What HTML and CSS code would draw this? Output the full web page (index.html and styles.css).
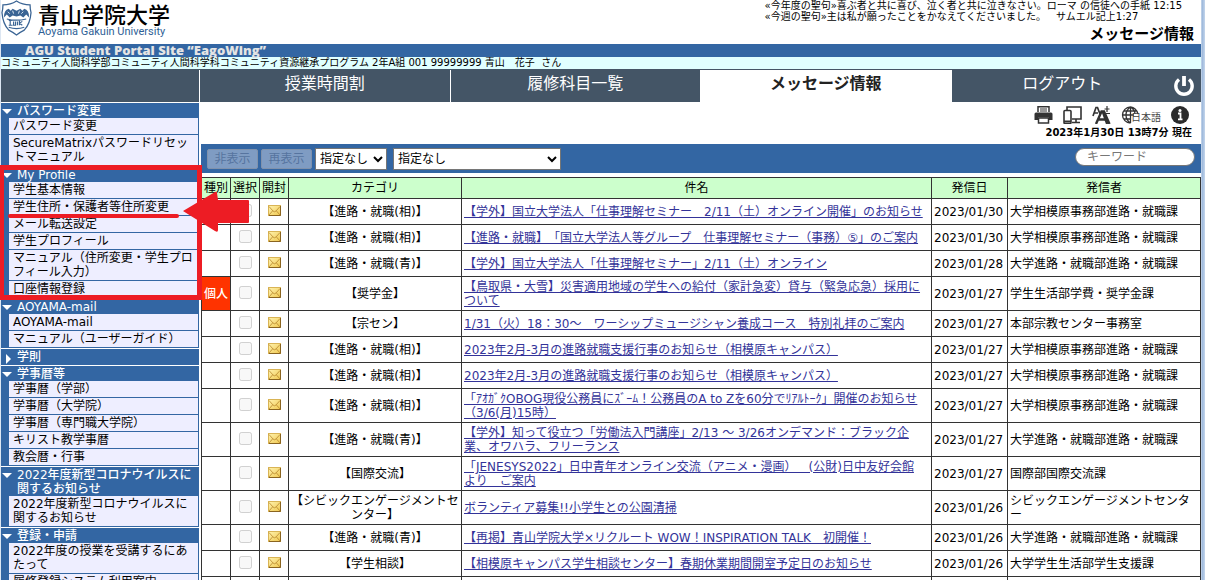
FILE: index.html
```html
<!DOCTYPE html>
<html lang="ja">
<head>
<meta charset="utf-8">
<title>メッセージ情報</title>
<link rel="stylesheet" href="styles.css">
</head>
<body>
<svg class="defs" width="0" height="0" aria-hidden="true">
  <defs>
    <linearGradient id="gold" x1="0" y1="0" x2="1" y2="1">
      <stop offset="0" stop-color="#fff3b0"/><stop offset="1" stop-color="#f0c850"/>
    </linearGradient>
    <symbol id="mail" viewBox="0 0 13 11">
      <rect x=".5" y=".5" width="12" height="10" fill="url(#gold)" stroke="#d9b455"/>
      <path d="M1 1.500 5 6Q6.500 7.500 8 6L12 1.500M1 10 4.500 6M12 10 8.500 6" fill="none" stroke="#b8862c" stroke-width=".8"/>
      <path d="M1 10.500H12.500V1" fill="none" stroke="#8a6420"/>
    </symbol>
  </defs>
</svg>
<div class="page">
  <header class="top">
    <div class="brand">
      <svg class="crest" viewBox="0 0 32 37" aria-hidden="true">
        <path d="M16 1Q22 5 30 5Q30 9 31 13Q30 25 24 31Q20 33 16 36Q12 33 8 31Q2 25 1 13Q2 9 2 5Q10 5 16 1Z" fill="#fff" stroke="#3a6494" stroke-width="1.300"/>
        <path d="M3 18Q3 10 8 9L10 11L12 9L16 11L20 9L22 11L24 9Q29 10 29 18L26 15L23 18L20 16L16 17L12 16L9 18L6 15Z" fill="#3a6494"/>
        <path d="M7 12l2 2m3-3l1 3m6-3l-1 3m5-2l-2 2" stroke="#dfe8f2" fill="none"/>
        <path d="M8 21h3M9.500 21v5M8 26h4M13 22v4h2v-4M17 22v4M19 21v5M19 24l3-2M19 24l3 2M6 19.500Q16 22 26 19.500M8 28Q16 31 24 28" stroke="#3a6494" fill="none" stroke-width="1.200"/>
      </svg>
      <div class="brand-text">
        <div class="brand-ja">青山学院大学</div>
        <div class="brand-en">Aoyama Gakuin University</div>
      </div>
    </div>
    <div class="top-right">
      <p class="verse">«今年度の聖句»喜ぶ者と共に喜び、泣く者と共に泣きなさい。ローマ の信徒への手紙 12:15<br>«今週の聖句»主は私が願ったことをかなえてくださいました。　サムエル記上1:27</p>
      <h1 class="title">メッセージ情報</h1>
    </div>
  </header>
  <div class="site">AGU Student Portal Site “EagoWing”</div>
  <div class="user">コミュニティ人間科学部コミュニティ人間科学科コミュニティ資源継承プログラム 2年A組 001 99999999 青山　花子&nbsp; さん</div>
  <nav class="nav">
    <div class="nav-blank"></div>
    <a class="tab" href="#">授業時間割</a>
    <a class="tab" href="#">履修科目一覧</a>
    <a class="tab active" href="#">メッセージ情報</a>
    <a class="tab logout" href="#"><span>ログアウト</span>
      <svg width="22" height="22" viewBox="0 0 22 22" aria-hidden="true"><path d="M6 4.500A8.200 8.200 0 1 0 16 4.500" fill="none" stroke="#fff" stroke-width="3.400"/><path d="M11 1v10" stroke="#fff" stroke-width="3.800"/></svg>
    </a>
  </nav>
  <div class="columns">
    <aside class="side">
      <section class="group"><h2>パスワード変更</h2>
        <ul><li><a href="#">パスワード変更</a></li><li><a href="#">SecureMatrixパスワードリセットマニュアル</a></li></ul></section>
      <section class="group marked"><h2>My Profile</h2>
        <ul><li><a href="#">学生基本情報</a></li><li><a href="#">学生住所・保護者等住所変更</a></li><li><a href="#">メール転送設定</a></li><li><a href="#">学生プロフィール</a></li><li><a href="#">マニュアル（住所変更・学生プロフィール入力）</a></li><li><a href="#">口座情報登録</a></li></ul>
        <div class="frame"></div>
        <svg class="arrow" width="242" height="42" viewBox="0 0 242 42" aria-hidden="true"><path d="M2 25H169" stroke="#ed1c24" stroke-width="4" stroke-linecap="round"/><path d="M175 20 207 1Q209 0 209 2L210 9H240Q241 9 241 10V31Q241 32 240 32H210V39Q210 42 207 40Z" fill="#ed1c24"/></svg>
      </section>
      <section class="group"><h2>AOYAMA-mail</h2>
        <ul><li><a href="#">AOYAMA-mail</a></li><li><a href="#">マニュアル（ユーザーガイド）</a></li></ul></section>
      <section class="group closed"><h2>学則</h2></section>
      <section class="group"><h2>学事暦等</h2>
        <ul><li><a href="#">学事暦（学部）</a></li><li><a href="#">学事暦（大学院）</a></li><li><a href="#">学事暦（専門職大学院）</a></li><li><a href="#">キリスト教学事暦</a></li><li><a href="#">教会暦・行事</a></li></ul></section>
      <section class="group"><h2>2022年度新型コロナウイルスに関するお知らせ</h2>
        <ul><li><a href="#">2022年度新型コロナウイルスに関するお知らせ</a></li></ul></section>
      <section class="group"><h2>登録・申請</h2>
        <ul><li><a href="#">2022年度の授業を受講するにあたって</a></li><li><a href="#">履修登録システム利用案内</a></li></ul></section>
    </aside>
    <main class="main">
      <div class="tools">
        <div class="icons">
          <svg width="19" height="18" viewBox="0 0 19 18" aria-label="印刷"><path d="M4 6V.800H15V6" fill="#fff" stroke="#333" stroke-width="1.500"/><path d="M6 3h7M6 5h7" stroke="#333"/><path d="M2 6.500H17Q18.500 6.500 18.500 8V14H15V11.500H4V14H.500V8Q.500 6.500 2 6.500Z" fill="#333"/><path d="M4.500 12H14.500V17H4.500Z" fill="#fff" stroke="#333" stroke-width="1.500"/></svg>
          <svg width="19" height="18" viewBox="0 0 19 18" aria-label="端末"><path d="M4 4V1H18V13H9M13 13v3M9 16.500H17" fill="none" stroke="#333" stroke-width="1.600"/><rect x="1" y="4.500" width="7" height="13" rx="1" fill="#fff" stroke="#333" stroke-width="1.600"/><path d="M1 15.500H8" stroke="#333" stroke-width="2"/></svg>
          <svg width="19" height="18" viewBox="0 0 19 18" aria-label="文字サイズ"><path d="M4 18 9.500 5.500H12L17.500 18M6.500 13.500H15" fill="none" stroke="#333" stroke-width="2.400"/><path d="M11 5.500 15.500 18" stroke="#333" stroke-width="3"/><path d="M1 10 4 1.500H5.500L8 8M2 7H6" fill="none" stroke="#333" stroke-width="1.700"/><path d="M15 0v6M12.500 3h5M13 7.500h5" stroke="#333" stroke-width="1.200"/></svg>
          <span class="lang"><svg width="18" height="18" viewBox="0 0 18 18" aria-hidden="true"><path d="M9.500 1V10M9.500 1A8 8 0 0 0 9.500 17M9.500 1Q5 4 5 9T9.500 17M1.500 9H10M3 5H15M3 13H10M9.500 1V17M9.500 1Q14 4 14 8M9.500 1Q15 1.500 17 8M10 9H13" fill="none" stroke="#333" stroke-width="1.300"/></svg><span>日本語</span></span>
          <svg width="18" height="18" viewBox="0 0 18 18" aria-label="情報"><circle cx="9" cy="9" r="9" fill="#2b2b2b"/><circle cx="9" cy="4.500" r="1.500" fill="#fff"/><path d="M7 7.500H9.500V13M7 13.300H11.500" fill="none" stroke="#fff" stroke-width="1.800"/></svg>
        </div>
        <div class="now">2023年1月30日 13時7分 現在</div>
      </div>
      <form class="bar">
        <button type="button" disabled>非表示</button>
        <button type="button" disabled>再表示</button>
        <select class="s1" aria-label="状態"><option>指定なし</option></select>
        <select class="s2" aria-label="カテゴリ"><option>指定なし</option></select>
        <input class="keyword" type="text" placeholder="キーワード" aria-label="キーワード">
      </form>
      <table class="list">
        <colgroup><col class="c-s"><col class="c-s"><col class="c-s"><col class="c-cat"><col><col class="c-date"><col class="c-from"></colgroup>
        <thead><tr><th>種別</th><th>選択</th><th>開封</th><th>カテゴリ</th><th>件名</th><th>発信日</th><th>発信者</th></tr></thead>
        <tbody>
          <tr><td></td><td><input type="checkbox" disabled aria-label="選択"></td><td><svg class="mail"><use href="#mail"/></svg></td><td>【進路・就職(相)】</td><td><a href="#">【学外】国立大学法人「仕事理解セミナー　2/11（土）オンライン開催」のお知らせ</a></td><td>2023/01/30</td><td>大学相模原事務部進路・就職課</td></tr>
          <tr><td></td><td><input type="checkbox" disabled aria-label="選択"></td><td><svg class="mail"><use href="#mail"/></svg></td><td>【進路・就職(相)】</td><td><a href="#">【進路・就職】「国立大学法人等グループ　仕事理解セミナー（事務）⑤」のご案内</a></td><td>2023/01/30</td><td>大学相模原事務部進路・就職課</td></tr>
          <tr><td></td><td><input type="checkbox" disabled aria-label="選択"></td><td><svg class="mail"><use href="#mail"/></svg></td><td>【進路・就職(青)】</td><td><a href="#">【学外】国立大学法人「仕事理解セミナー」2/11（土）オンライン</a></td><td>2023/01/28</td><td>大学進路・就職部進路・就職課</td></tr>
          <tr><td class="personal">個人</td><td><input type="checkbox" disabled aria-label="選択"></td><td><svg class="mail"><use href="#mail"/></svg></td><td>【奨学金】</td><td><a href="#">【鳥取県・大雪】災害適用地域の学生への給付（家計急変）貸与（緊急応急）採用について</a></td><td>2023/01/27</td><td>学生生活部学費・奨学金課</td></tr>
          <tr><td></td><td><input type="checkbox" disabled aria-label="選択"></td><td><svg class="mail"><use href="#mail"/></svg></td><td>【宗セン】</td><td><a href="#">1/31（火）18：30～　ワーシップミュージシャン養成コース　特別礼拝のご案内</a></td><td>2023/01/27</td><td>本部宗教センター事務室</td></tr>
          <tr><td></td><td><input type="checkbox" disabled aria-label="選択"></td><td><svg class="mail"><use href="#mail"/></svg></td><td>【進路・就職(相)】</td><td><a href="#">2023年2月-3月の進路就職支援行事のお知らせ（相模原キャンパス）</a></td><td>2023/01/27</td><td>大学相模原事務部進路・就職課</td></tr>
          <tr><td></td><td><input type="checkbox" disabled aria-label="選択"></td><td><svg class="mail"><use href="#mail"/></svg></td><td>【進路・就職(相)】</td><td><a href="#">2023年2月-3月の進路就職支援行事のお知らせ（相模原キャンパス）</a></td><td>2023/01/27</td><td>大学相模原事務部進路・就職課</td></tr>
          <tr><td></td><td><input type="checkbox" disabled aria-label="選択"></td><td><svg class="mail"><use href="#mail"/></svg></td><td>【進路・就職(相)】</td><td><a href="#">「ｱｵｶﾞｸOBOG現役公務員にｽﾞｰﾑ！公務員のA to Zを60分でﾘｱﾙﾄｰｸ」開催のお知らせ（3/6(月)15時）</a></td><td>2023/01/27</td><td>大学相模原事務部進路・就職課</td></tr>
          <tr><td></td><td><input type="checkbox" disabled aria-label="選択"></td><td><svg class="mail"><use href="#mail"/></svg></td><td>【進路・就職(青)】</td><td><a href="#">【学外】知って役立つ「労働法入門講座」2/13 ～ 3/26オンデマンド：ブラック企業、オワハラ、フリーランス</a></td><td>2023/01/27</td><td>大学進路・就職部進路・就職課</td></tr>
          <tr><td></td><td><input type="checkbox" disabled aria-label="選択"></td><td><svg class="mail"><use href="#mail"/></svg></td><td>【国際交流】</td><td><a href="#">「JENESYS2022」日中青年オンライン交流（アニメ・漫画）　(公財)日中友好会館<br>より　ご案内</a></td><td>2023/01/27</td><td>国際部国際交流課</td></tr>
          <tr><td></td><td><input type="checkbox" disabled aria-label="選択"></td><td><svg class="mail"><use href="#mail"/></svg></td><td>【シビックエンゲージメントセンター】</td><td><a href="#">ボランティア募集!!小学生との公園清掃</a></td><td>2023/01/26</td><td>シビックエンゲージメントセンター</td></tr>
          <tr><td></td><td><input type="checkbox" disabled aria-label="選択"></td><td><svg class="mail"><use href="#mail"/></svg></td><td>【進路・就職(青)】</td><td><a href="#">【再掲】青山学院大学×リクルート WOW！INSPIRATION TALK　初開催！</a></td><td>2023/01/26</td><td>大学進路・就職部進路・就職課</td></tr>
          <tr><td></td><td><input type="checkbox" disabled aria-label="選択"></td><td><svg class="mail"><use href="#mail"/></svg></td><td>【学生相談】</td><td><a href="#">【相模原キャンパス学生相談センター】春期休業期間開室予定日のお知らせ</a></td><td>2023/01/26</td><td>大学学生生活部学生支援課</td></tr>
          <tr><td></td><td></td><td></td><td></td><td></td><td></td><td></td></tr>
        </tbody>
      </table>
    </main>
  </div>
</div>
</body>
</html>
```
FILE: styles.css
```css
* { box-sizing: border-box; }
body {
  margin: 0;
  height: 100vh;
  overflow: hidden;
  background: linear-gradient(to left, #c4d6ec, #9ab6da 3px, #dce6f2 4px);
  font: 12px/14px "DejaVu Sans", "Noto Sans CJK JP", sans-serif;
  text-spacing-trim: space-all;
  color: #000;
}
h1, h2, p, ul { margin: 0; padding: 0; font-weight: normal; }
ul { list-style: none; }
a { color: inherit; text-decoration: none; }
button, input, select { font: inherit; margin: 0; }
svg { display: block; flex: none; }
.defs { position: absolute; }
.page { min-height: 100vh; margin: 0 4px 0 1px; background: #fff; }

.top { display: flex; justify-content: space-between; height: 44px; }
.brand { display: flex; gap: 6px; }
.crest { width: 31px; height: 36px; }
.brand-ja { font: 500 22px/26px "Noto Sans CJK JP", sans-serif; }
.brand-en { font: 11px/12px Roboto, sans-serif; color: #2f5f96; }
.top-right { display: flex; flex-direction: column; justify-content: space-between; padding: 0 7px 0 0; }
.verse { padding-right: 12px; font-size: 10px; line-height: 11px; }
.title { font-size: 15px; line-height: 20px; font-weight: bold; text-align: right; }

.site { padding-left: 24px; background: #3366a3; color: #e4e4e4; font: 800 13px/13px "Open Sans", sans-serif; }
.user { height: 13px; border-bottom: 1px solid #456; background: #e0ffff; font-size: 10px; line-height: 12px; white-space: nowrap; overflow: hidden; }

.nav { display: flex; gap: 1px; height: 32px; }
.nav-blank { width: 198px; background: #456; }
.tab { flex: 1; padding-bottom: 4px; background: #456; color: #fff; font-size: 16px; line-height: 28px; text-align: center; }
.tab.active { background: #fff; color: #222; font-weight: bold; }
.logout { display: flex; align-items: center; padding: 0; }
.logout span { flex: 1; padding-bottom: 4px; }
.logout svg { margin-right: 6px; }

.columns { display: flex; align-items: flex-start; gap: 2px; padding-top: 1px; }
.side { flex: none; width: 198px; }
.group { padding: 0 1px 1px 8px; margin-bottom: 1px; background: #3366a3; }
.group h2 { position: relative; padding: 1px 0 0 8px; color: #fff; font-size: 12px; font-weight: 500; }
.group h2::before {
  content: "";
  position: absolute;
  left: -7px;
  top: 6px;
  border: 5px solid transparent;
  border-top-color: #fff;
}
.closed h2::before { left: -3px; top: 5px; border-color: transparent transparent transparent #fff; }
.group li { padding: 1px 0 1px 4px; background: #eef; }
.group li + li { border-top: 1px solid #3366a3; }
.marked { position: relative; }
.frame { position: absolute; inset: -2px -3px -2px -1px; border: 5px solid #ed1c24; border-left-width: 4px; }
.arrow { position: absolute; left: 7px; top: 24px; z-index: 2; }

.main { flex: 1; min-width: 0; }
.tools { display: flex; flex-direction: column; align-items: flex-end; height: 41px; padding-top: 3px; }
.icons { display: flex; gap: 10px; padding-right: 12px; }
.lang { display: flex; font-size: 10px; color: #444; }
.lang span { margin-left: -8px; padding-top: 5px; }
.now { padding: 1px 9px 0 0; font-size: 10px; font-weight: bold; }

.bar { display: flex; align-items: center; gap: 3px; height: 29px; padding: 0 6px; margin-bottom: 4px; background: #3366a3; }
.bar button {
  width: 51px;
  height: 20px;
  padding: 0;
  border: 1px solid #8092ac;
  border-radius: 2px;
  background: #7f9cc3;
  color: #56749f;
}
.bar select { height: 22px; padding: 0; border: 1px solid #767676; border-radius: 0; background: #fff; color: #000; }
.s1 { width: 72px; }
.s2 { width: 168px; margin-left: 3px; }
.keyword { width: 120px; height: 18px; margin: 0 0 4px auto; padding: 0 11px; border: 1px solid #777; border-radius: 9px; background: #fff; }
.keyword::placeholder { color: #777; }

.list { width: 100%; table-layout: fixed; border-collapse: collapse; }
.c-s { width: 29px; }
.c-cat { width: 173px; }
.c-date { width: 76px; }
.c-from { width: 193px; }
.list th, .list td { height: 26px; padding: 3px 2px 2px; border: 1px solid #333; }
.list th { height: 21px; padding: 0; background: #cfc; font-weight: normal; }
.list td:nth-child(-n+4) { text-align: center; }
.list td:nth-child(-n+3) { padding: 0; }
.list td a { color: #339; text-decoration: underline; }
.list td.personal { background: #f30; color: #fff; font-weight: 500; }
.list input { display: block; width: 13px; height: 13px; margin: 0 auto 2px; }
.mail { width: 13px; height: 11px; margin: 0 auto 2px; }
```
